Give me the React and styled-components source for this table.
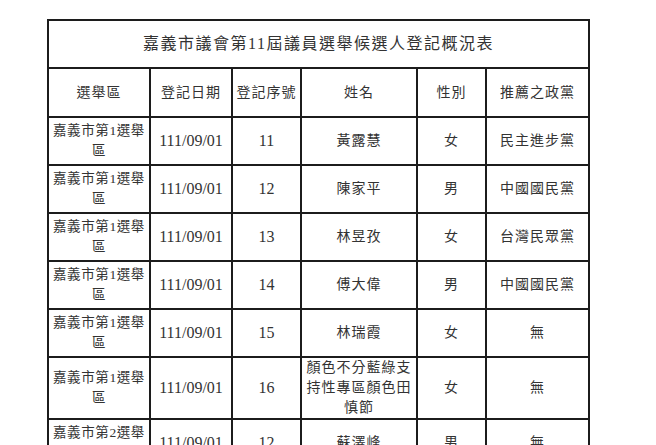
import styled, { createGlobalStyle } from 'styled-components';

const GlobalStyle = createGlobalStyle`
  html, body {
    margin: 0;
    padding: 0;
    background: #ffffff;
  }
`;

const columns = [102, 82, 69, 116, 69, 103];

const headers = ['選舉區', '登記日期', '登記序號', '姓名', '性別', '推薦之政黨'];

const rows = [
  { district: '嘉義市第1選舉區', date: '111/09/01', no: '11', name: '黃露慧', sex: '女', party: '民主進步黨' },
  { district: '嘉義市第1選舉區', date: '111/09/01', no: '12', name: '陳家平', sex: '男', party: '中國國民黨' },
  { district: '嘉義市第1選舉區', date: '111/09/01', no: '13', name: '林昱孜', sex: '女', party: '台灣民眾黨' },
  { district: '嘉義市第1選舉區', date: '111/09/01', no: '14', name: '傅大偉', sex: '男', party: '中國國民黨' },
  { district: '嘉義市第1選舉區', date: '111/09/01', no: '15', name: '林瑞霞', sex: '女', party: '無' },
  { district: '嘉義市第1選舉區', date: '111/09/01', no: '16', name: '顏色不分藍綠支持性專區顏色田慎節', sex: '女', party: '無', tall: true },
  { district: '嘉義市第2選舉區', date: '111/09/01', no: '12', name: '蘇澤峰', sex: '男', party: '無' },
];

function App() {
  return (
    <Page>
      <GlobalStyle />
      <Table>
        <colgroup>
          {columns.map((w, i) => (
            <col key={i} style={{ width: w }} />
          ))}
        </colgroup>
        <tbody>
          <Row $height={48}>
            <TitleCell colSpan={6}>嘉義市議會第11屆議員選舉候選人登記概況表</TitleCell>
          </Row>
          <Row $height={49}>
            {headers.map((h) => (
              <Cell key={h}>{h}</Cell>
            ))}
          </Row>
          {rows.map((r, i) => (
            <Row key={i} $height={r.tall ? 57 : 48}>
              <DistrictCell>{r.district}</DistrictCell>
              <NumCell>{r.date}</NumCell>
              <NumCell>{r.no}</NumCell>
              <Cell>{r.name}</Cell>
              <Cell>{r.sex}</Cell>
              <Cell>{r.party}</Cell>
            </Row>
          ))}
        </tbody>
      </Table>
    </Page>
  );
}

export default App;

const Page = styled.main`
  width: 656px;
  height: 445px;
  overflow: hidden;
  padding: 19px 0 0 47px;
  box-sizing: border-box;
  background: #ffffff;
`;

const Table = styled.table`
  width: 541px;
  table-layout: fixed;
  border-collapse: collapse;
  font-family: 'Liberation Serif', 'Noto Sans CJK TC', serif;
  color: #333333;
`;

const Row = styled.tr`
  height: ${(props) => props.$height}px;
`;

const Cell = styled.td`
  border: 2px solid #1c1c1c;
  padding: 0 3px;
  text-align: center;
  vertical-align: middle;
  font-size: 14px;
  letter-spacing: 1px;
  line-height: 20px;
`;

const DistrictCell = styled(Cell)`
  padding: 0 1px;
  font-size: 13.5px;
  letter-spacing: 0.6px;
`;

const NumCell = styled(Cell)`
  font-size: 16px;
  letter-spacing: 0;
`;

const TitleCell = styled(Cell)`
  font-size: 16px;
  letter-spacing: 1.5px;
`;
